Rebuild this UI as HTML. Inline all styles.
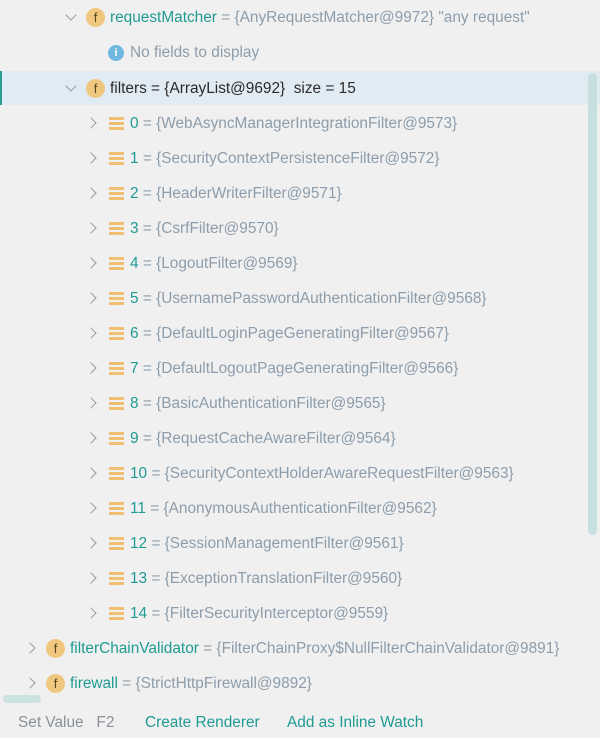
<!DOCTYPE html>
<html><head><meta charset="utf-8"><style>
body{margin:0;width:600px;height:738px;background:#f0f0f0;font-family:"Liberation Sans","Noto Sans CJK SC",sans-serif;font-size:15.4px;position:relative;overflow:hidden}
.r{position:absolute;left:0;right:0;height:35px;line-height:36px;white-space:nowrap}
.n{color:#1f9b93}.v{color:#8d9dab}.d{color:#2b2b2b}
.chev{position:absolute;top:13px;width:7px;height:7px;border-right:1.5px solid #9a9a9a;border-bottom:1.5px solid #9a9a9a}
.down{transform:rotate(45deg);top:11px}
.right{transform:rotate(-45deg)}
.f{position:absolute;top:8px;width:19px;height:19px;border-radius:50%;background:#f0c77e;color:#5a4520;font-size:13px;line-height:19px;text-align:center}
.lst{position:absolute;top:11px;width:15px;height:13px;background:repeating-linear-gradient(#f0c070 0 3px,transparent 3px 5px)}
.t{position:absolute;top:0}
</style></head><body>
<div class="r" style="top:0"><span class="chev down" style="left:67px"></span><span class="f" style="left:86px">f</span><span class="t" style="left:110px"><span class="n">requestMatcher</span><span class="v"> = {AnyRequestMatcher@9972} "any request"</span></span></div>
<div class="r" style="top:35px"><span style="position:absolute;left:108px;top:10px;width:16px;height:16px;border-radius:50%;background:#6fb7de;color:#fff;font-size:11px;line-height:16px;text-align:center;font-weight:bold">i</span><span class="t v" style="left:130px">No fields to display</span></div>
<div class="r" style="top:71px;height:34px;line-height:35px;background:#e0ebf4;border-left:2px solid #2a9d8f"><span class="chev down" style="left:65px"></span><span class="f" style="left:84px">f</span><span class="t d" style="left:108px">filters = {ArrayList@9692}&nbsp; size = 15</span></div>
<div style="position:absolute;left:588px;top:73px;width:9px;height:462px;border-radius:5px;background:#c5e0df"></div>
<div id="items"></div>
<div class="r" style="top:631px"><span class="chev right" style="left:26px"></span><span class="f" style="left:46px">f</span><span class="t" style="left:70px"><span class="n">filterChainValidator</span><span class="v"> = {FilterChainProxy$NullFilterChainValidator@9891}</span></span></div>
<div class="r" style="top:666px"><span class="chev right" style="left:26px"></span><span class="f" style="left:46px">f</span><span class="t" style="left:70px"><span class="n">firewall</span><span class="v"> = {StrictHttpFirewall@9892}</span></span></div>
<div style="position:absolute;left:3px;top:695px;width:38px;height:8px;border-radius:4px;background:#cde3e1"></div>
<div style="position:absolute;top:712px;left:18px;line-height:22px;white-space:nowrap"><span style="color:#8a9199">Set Value&nbsp;&nbsp; F2</span><span class="n" style="position:absolute;left:127px">Create Renderer</span><span class="n" style="position:absolute;left:269px">Add as Inline Watch</span></div>
<script>
var n=["WebAsyncManagerIntegrationFilter@9573","SecurityContextPersistenceFilter@9572","HeaderWriterFilter@9571","CsrfFilter@9570","LogoutFilter@9569","UsernamePasswordAuthenticationFilter@9568","DefaultLoginPageGeneratingFilter@9567","DefaultLogoutPageGeneratingFilter@9566","BasicAuthenticationFilter@9565","RequestCacheAwareFilter@9564","SecurityContextHolderAwareRequestFilter@9563","AnonymousAuthenticationFilter@9562","SessionManagementFilter@9561","ExceptionTranslationFilter@9560","FilterSecurityInterceptor@9559"];
var h="";for(var i=0;i<15;i++){h+='<div class="r" style="top:'+(106+i*35)+'px"><span class="chev right" style="left:87px"></span><span class="lst" style="left:109px"></span><span class="t" style="left:130px"><span class="n">'+i+'</span><span class="v"> = {'+n[i]+'}</span></span></div>';}
document.getElementById("items").innerHTML=h;
</script>
</body></html>
